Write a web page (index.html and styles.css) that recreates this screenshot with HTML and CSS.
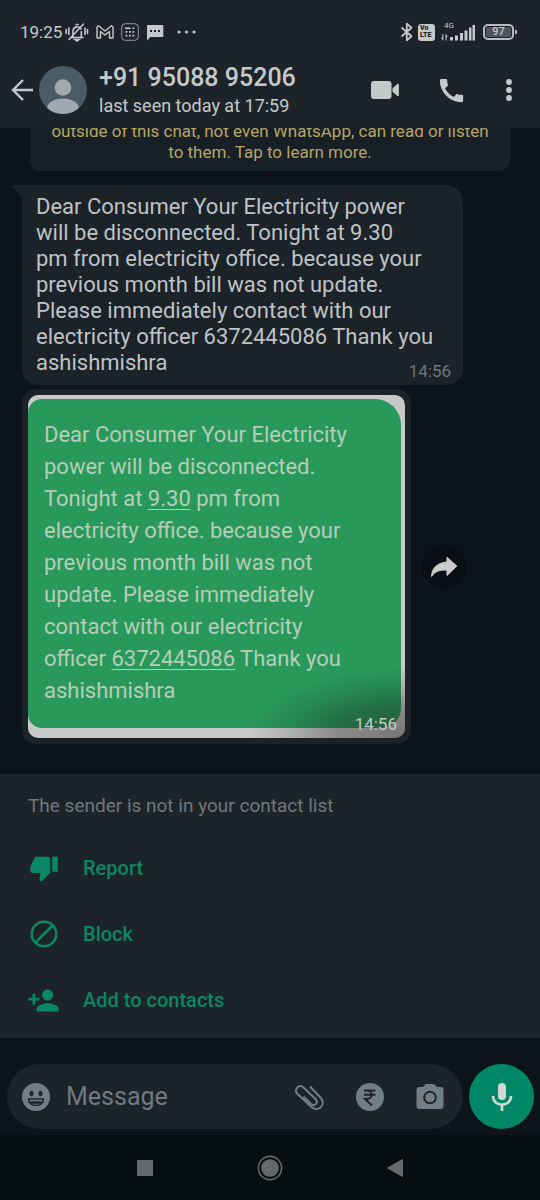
FILE: index.html
```html
<!DOCTYPE html>
<html lang="en">
<head>
<meta charset="utf-8">
<meta name="viewport" content="width=device-width, initial-scale=1">
<title>+91 95088 95206</title>
<link rel="stylesheet" href="styles.css">
</head>
<body>
<div class="screen">
  <header class="header">
    <div class="status">
      <div class="status-group status-left">
        <time class="clock">19:25</time>
        <svg class="bell" width="24" height="20" viewBox="0 0 24 20" fill="none" stroke="currentColor" stroke-width="1.6" stroke-linecap="round"><path d="M6 15.5h12M8 15V8.5a4.3 4.3 0 0 1 8-1.5M16.3 9.5V15M4 17.5 18.5 2M1.2 7.5v4M3.8 6v6.500M22.500 7.500v4M20 6v6.500M11 2.500h2"/><path d="M10 17.500h4l-2 1.500z" fill="currentColor"/></svg>
        <svg width="18" height="16" viewBox="0 0 18 16" fill="none" stroke="currentColor" stroke-width="1.4" stroke-linejoin="round"><path d="M1 14V3l1.500-1.200L9 7l6.500-5.200L17 3v11h-3.500V7.500L9 11 4.500 7.500V14z"/></svg>
        <svg width="18" height="18" viewBox="0 0 18 18"><rect x=".7" y=".7" width="16.600" height="16.600" rx="3.500" fill="none" stroke="currentColor" stroke-opacity=".7"/><path fill="currentColor" d="M4 4.500h5.500V6H4zM11.500 4.500h1.800V6h-1.800zM8 8h1.800v1.800H8zM11.500 8h1.800v1.800h-1.800zM4.500 8h1.800v1.800H4.500zM4.500 11.800h1.800v1.800H4.500zM8 11.800h1.800v1.800H8zM11.500 11.800h1.800v1.800h-1.800z"/></svg>
        <svg class="sms" width="18" height="17" viewBox="0 0 18 17"><path fill="currentColor" fill-rule="evenodd" d="M1.500 1h15a.8.8 0 0 1 .8.8v10.400a.8.8 0 0 1-.8.8H4.500L1 16.500V1.800A.8.8 0 0 1 1.500 1zM4 6v2h2V6zm4 0v2h2V6zm4 0v2h2V6z"/></svg>
        <svg class="more" width="20" height="4" viewBox="0 0 20 4" fill="currentColor"><circle cx="2" cy="2" r="1.500"/><circle cx="9.500" cy="2" r="1.500"/><circle cx="17" cy="2" r="1.500"/></svg>
      </div>
      <div class="status-group status-right">
        <svg width="14" height="20" viewBox="0 0 14 20" fill="none" stroke="currentColor" stroke-width="1.800" stroke-linejoin="round"><path d="m1.500 5.500 10 8.800-4.700 4V1.700l4.700 4-10 8.800"/></svg>
        <span class="volte"><span>Vo</span><span>LTE</span></span>
        <span class="signal"><span class="network">4G</span>
          <svg width="34" height="17" viewBox="0 0 34 17" fill="currentColor"><path d="M1.800 16.500 0 13.500h1.300V10h1v6.500zM5 10l1.800 3H5.500v3.500h-1V10zM9 13h3v3.500H9zM14 11.500h3v5h-3zM19 9h3v7.500h-3zM23.500 6.500h3v10h-3zM28 3.500h2.500v13H28zM31.500 1H34v15.500h-2.500z"/></svg></span>
        <span class="battery">97</span>
      </div>
    </div>
    <div class="appbar">
      <button class="icon-button back" aria-label="Back"><svg width="23" height="22" viewBox="0 0 23 22" fill="none" stroke="currentColor" stroke-width="2.400"><path d="M22 11H2M12 1 2 11l10 10"/></svg></button>
      <svg class="avatar" width="48" height="48" viewBox="0 0 48 48"><defs><clipPath id="disc"><circle cx="24" cy="24" r="24"/></clipPath></defs><g clip-path="url(#disc)"><path fill="#4b5c67" d="M0 0h48v48H0z"/><circle cx="24" cy="21.500" r="8.300" fill="#a1a9b0"/><path fill="#a1a9b0" d="M8 43c0-7 8-10.500 16-10.500S40 36 40 43v5H8z"/></g></svg>
      <div class="contact">
        <h1 class="name">+91 95088 95206</h1>
        <p class="seen">last seen today at 17:59</p>
      </div>
      <div class="actions">
        <button class="icon-button" aria-label="Video call"><svg width="30" height="20" viewBox="0 0 30 20" fill="currentColor"><rect x="1" y="1" width="20.500" height="18" rx="3"/><path d="M22.500 8.200 27 4.200c1-.8 1.900-.5 1.900.6v10.400c0 1.100-.9 1.400-1.900.6l-4.500-4z"/></svg></button>
        <button class="icon-button" aria-label="Voice call"><svg width="31" height="31" viewBox="0 0 24 24" fill="currentColor"><path d="M20.010 15.380c-1.230 0-2.420-.2-3.530-.56-.35-.12-.74-.03-1.010.24l-1.570 1.970c-2.830-1.350-5.480-3.900-6.890-6.830l1.950-1.660c.27-.28.35-.67.24-1.020-.37-1.110-.56-2.300-.56-3.530 0-.54-.45-.99-.99-.99H4.190C3.650 3 3 3.240 3 3.990 3 13.280 10.730 21 20.010 21c.71 0 .99-.63.99-1.180v-3.450c0-.54-.45-.99-.99-.99z"/></svg></button>
        <button class="icon-button" aria-label="More options"><svg width="12" height="24" viewBox="0 0 12 24" fill="currentColor"><circle cx="6" cy="4" r="2.900"/><circle cx="6" cy="12" r="2.900"/><circle cx="6" cy="20" r="2.900"/></svg></button>
      </div>
    </div>
  </header>

  <main class="chat">
    <p class="notice">outside of this chat, not even WhatsApp, can read or listen to them. Tap to learn more.</p>
    <article class="bubble text-bubble">
      <svg class="tail" width="12" height="14" viewBox="0 0 12 14"><path fill="#1b2228" d="M12 0H1.500C0 0 0 1 .8 2L10 13v1h2z"/></svg>
      <p class="message">Dear Consumer Your Electricity power<br>will be disconnected. Tonight at 9.30<br>pm from electricity office. because your<br>previous month bill was not update.<br>Please immediately contact with our<br>electricity officer 6372445086 Thank you<br>ashishmishra</p>
      <time class="stamp">14:56</time>
    </article>
    <div class="media-row">
      <article class="bubble media-bubble">
        <div class="photo">
          <p class="sheet">Dear Consumer Your Electricity<br>power will be disconnected.<br>Tonight at <a href="#time">9.30</a> pm from<br>electricity office. because your<br>previous month bill was not<br>update. Please immediately<br>contact with our electricity<br>officer <a href="tel:6372445086">6372445086</a> Thank you<br>ashishmishra</p>
          <time class="stamp photo-stamp">14:56</time>
        </div>
      </article>
      <button class="forward" aria-label="Forward"><svg width="28" height="22" viewBox="0 0 28 22" fill="currentColor"><path d="M17 1.200 26.800 10 17 19.500v-5.300C9.500 13.500 5 15.500 1.500 20.500 1.500 12 8 6.500 17 6z" stroke="currentColor" stroke-linejoin="round"/></svg></button>
    </div>
  </main>

  <section class="panel">
    <p class="panel-title">The sender is not in your contact list</p>
    <button class="panel-action"><span class="panel-icon"><svg width="30" height="30" viewBox="0 0 24 24" fill="currentColor"><path d="M15 3H6c-.83 0-1.540.5-1.840 1.220l-3.020 7.050c-.09.23-.14.47-.14.73v2c0 1.100.9 2 2 2h6.310l-.95 4.570-.03.32c0 .41.17.79.44 1.060L9.830 23l6.590-6.590c.36-.36.58-.86.58-1.410V5c0-1.100-.9-2-2-2zm3.500 0v12H23V3h-4.500z"/></svg></span>Report</button>
    <button class="panel-action"><span class="panel-icon"><svg width="30" height="30" viewBox="0 0 30 30" fill="none" stroke="currentColor" stroke-width="2.500"><circle cx="15" cy="15" r="12.300"/><path d="m6.500 23.500 17-17"/></svg></span>Block</button>
    <button class="panel-action"><span class="panel-icon"><svg width="33" height="33" viewBox="0 0 24 24" fill="currentColor"><path d="M15 12c2.210 0 4-1.790 4-4s-1.790-4-4-4-4 1.790-4 4 1.790 4 4 4zm-9-2V7H4v3H1v2h3v3h2v-3h3v-2H6zm9 4c-2.670 0-8 1.340-8 4v2h16v-2c0-2.660-5.330-4-8-4z"/></svg></span>Add to contacts</button>
  </section>

  <form class="compose">
    <div class="field">
      <button type="button" class="icon-button" aria-label="Emoji"><svg width="28" height="28" viewBox="0 0 28 28"><circle cx="14" cy="14" r="14" fill="currentColor"/><ellipse cx="9.500" cy="10.500" rx="2" ry="2.800" fill="#1c242a"/><ellipse cx="18.500" cy="10.500" rx="2" ry="2.800" fill="#1c242a"/><path d="M6.500 16h15c0 4-3 6.500-7.500 6.500S6.500 20 6.500 16z" fill="none" stroke="#1c242a" stroke-width="1.600" stroke-linejoin="round"/><path d="M7 18.200h14l-1.500 2.500h-11z" fill="#1c242a"/></svg></button>
      <input class="entry" type="text" placeholder="Message" aria-label="Message">
      <div class="tools">
        <button type="button" class="icon-button" aria-label="Attach"><svg width="30" height="30" viewBox="0 0 30 30" fill="none" stroke="currentColor" stroke-width="2" stroke-linecap="butt"><path d="M16 4.500 26.500 15.500C32.500 22.500 24.500 31 17.500 25L3.500 12C-.5 7.500 5 1.500 9.500 5.500L21.500 17c3.500 4-1 8-4.500 4.800L9.500 14.500"/></svg></button>
        <button type="button" class="icon-button" aria-label="Payment"><svg width="28" height="28" viewBox="0 0 28 28"><circle cx="14" cy="14" r="14" fill="currentColor"/><path d="M8 7.500h11.500M8 11.800h11.500M10 7.500c7.500 0 7.500 8.500 0 8.500H9l7 6.500" fill="none" stroke="#1c242a" stroke-width="2"/></svg></button>
        <button type="button" class="icon-button" aria-label="Camera"><svg width="28" height="28" viewBox="0 0 28 28"><path fill="currentColor" d="M10 1h8l3 3h3.500A3 3 0 0 1 27.500 7v16a3 3 0 0 1-3 3h-21a3 3 0 0 1-3-3V7a3 3 0 0 1 3-3H7z"/><circle cx="14" cy="14.500" r="5.800" fill="none" stroke="#1c242a" stroke-width="2"/></svg></button>
      </div>
    </div>
    <button type="button" class="mic" aria-label="Record voice message"><svg width="22" height="30" viewBox="0 0 22 30" fill="none" stroke="currentColor" stroke-width="2.600"><rect x="7" y="1" width="8" height="17" rx="4" fill="currentColor" stroke="none"/><path d="M2 14c0 11.500 18 11.500 18 0M11 22v7"/></svg></button>
  </form>

  <nav class="nav">
    <button class="icon-button nav-button" aria-label="Recent apps"><svg width="16" height="16" viewBox="0 0 16 16"><rect width="16" height="16" rx="1" fill="currentColor"/></svg></button>
    <button class="icon-button nav-button" aria-label="Home"><svg width="26" height="26" viewBox="0 0 26 26"><circle cx="13" cy="13" r="11.600" fill="none" stroke="currentColor" stroke-width="1.600"/><circle cx="13" cy="13" r="8.800" fill="currentColor"/></svg></button>
    <button class="icon-button nav-button" aria-label="Navigate back"><svg width="18" height="20" viewBox="0 0 18 20"><path fill="currentColor" d="M16 1.200c.6-.4 1 0 1 .6v16.400c0 .6-.4 1-1 .6L1.500 10.600c-.6-.4-.6-.8 0-1.200z"/></svg></button>
  </nav>
</div>
</body>
</html>
```
FILE: styles.css
```css
* { box-sizing: border-box; }

body {
  margin: 0;
  background: #0c131a;
  color: #bfc3c6;
  font-family: Roboto, "Noto Sans", sans-serif;
}

h1, p { margin: 0; }

button, input {
  border: 0;
  padding: 0;
  background: none;
  color: inherit;
  font: inherit;
}

svg { display: block; flex: none; }

.screen {
  display: flex;
  flex-direction: column;
  height: 100vh;
}

.header {
  flex: none;
  background: #1c242a;
  color: #c6c9ca;
  position: relative;
  z-index: 1;
}

.status {
  display: flex;
  justify-content: space-between;
  padding: 18px 24px 6px 20px;
}

.status-group {
  display: flex;
  align-items: center;
  height: 28px;
}

.status-left { gap: 7px; }
.status-right { gap: 4px; }

.clock { font-size: 17px; }
.bell { margin-left: -4px; }
.more { margin-left: 6px; }

.volte {
  display: flex;
  flex-direction: column;
  width: 17px;
  height: 17px;
  margin-right: 2px;
  padding: 1px 2px;
  border-radius: 3px;
  background: #c6c9ca;
  color: #1c242a;
  font-size: 7px;
  font-weight: 900;
  line-height: 7px;
}

.signal { position: relative; }

.network {
  position: absolute;
  left: 3px;
  top: -2px;
  font-size: 8px;
  line-height: 8px;
}

.battery {
  position: relative;
  width: 31px;
  height: 16px;
  margin: 0 2px 0 4px;
  border: 2px solid #b9bcbe;
  border-radius: 5px;
  background: #50565a;
  background-clip: content-box;
  padding: 1px;
  font-size: 11px;
  font-weight: 500;
  line-height: 10px;
  text-align: center;
}

.battery::after {
  content: "";
  position: absolute;
  right: -5px;
  top: 4px;
  width: 2px;
  height: 4px;
  background: #b9bcbe;
}

.appbar {
  display: flex;
  align-items: center;
  height: 76px;
  padding: 0 25px 0 11px;
}

.icon-button {
  display: flex;
  align-items: center;
  justify-content: center;
}

.avatar { margin: 0 12px 0 5px; }

.contact {
  flex: 1;
  min-width: 0;
  padding-top: 2px;
}

.name {
  font-size: 25px;
  font-weight: 500;
  line-height: 30px;
}

.seen {
  font-size: 18px;
  line-height: 26px;
}

.actions {
  display: flex;
  align-items: center;
  gap: 36px;
}

.chat {
  flex: 1;
  min-height: 0;
  display: flex;
  flex-direction: column;
  justify-content: flex-end;
  overflow: hidden;
  padding: 0 30px 30px 22px;
}

.notice {
  flex: none;
  margin: 0 0 14px 8px;
  padding: 8px 12px;
  border-radius: 10px;
  background: #172026;
  color: #b9a563;
  font-size: 17px;
  line-height: 21px;
  text-align: center;
}

.bubble {
  flex: none;
  position: relative;
  background: #1b2228;
}

.text-bubble {
  align-self: flex-start;
  width: fit-content;
  margin-bottom: 4px;
  padding: 9px 30px 9px 14px;
  border-radius: 0 16px 16px 16px;
}

.tail {
  position: absolute;
  left: -10px;
  top: 0;
}

.message {
  font-size: 22px;
  line-height: 26px;
}

.stamp {
  position: absolute;
  right: 12px;
  bottom: 4px;
  color: #70777c;
  font-size: 17px;
  line-height: 20px;
}

.media-row {
  flex: none;
  display: flex;
  align-items: center;
  gap: 11px;
}

.media-bubble {
  padding: 6px;
  border-radius: 14px;
}

.photo {
  position: relative;
  overflow: hidden;
  padding: 4px 4px 10px 0;
  border-radius: 10px;
  background: #c9c9c9;
}

.photo::after {
  content: "";
  position: absolute;
  inset: 0;
  background: radial-gradient(ellipse 160px 72px at 100% 100%, rgba(24, 24, 24, .48), rgba(24, 24, 24, .34) 45%, rgba(24, 24, 24, .12) 75%, rgba(24, 24, 24, 0));
}

.sheet {
  padding: 20px 54px 21px 16px;
  border-radius: 14px 26px 20px 14px;
  background: #29995b;
  color: #b5cdb9;
  font-size: 22px;
  line-height: 32px;
}

.sheet a {
  color: inherit;
  text-decoration: underline;
  text-decoration-thickness: 1px;
  text-underline-offset: 3px;
}

.photo-stamp {
  z-index: 1;
  right: 8px;
  color: #c4c8c6;
}

.forward {
  display: flex;
  align-items: center;
  justify-content: center;
  width: 44px;
  height: 44px;
  border-radius: 50%;
  background: #090f15;
  color: #cccccc;
}

.panel {
  flex: none;
  padding: 0 28px 5px;
  background: #1c242a;
}

.panel-title {
  padding: 19px 0 16px;
  color: #70777c;
  font-size: 19px;
  line-height: 26px;
}

.panel-action {
  display: flex;
  align-items: center;
  gap: 24px;
  width: 100%;
  height: 66px;
  color: #0a8765;
  font-size: 20px;
  font-weight: 500;
}

.panel-icon {
  display: flex;
  justify-content: center;
  width: 31px;
}

.compose {
  flex: none;
  display: flex;
  gap: 6px;
  padding: 26px 6px 6px 7px;
}

.field {
  flex: 1;
  min-width: 0;
  display: flex;
  align-items: center;
  gap: 16px;
  height: 65px;
  padding: 0 19px 0 15px;
  border-radius: 33px;
  background: #1c242a;
  color: #727e85;
}

.entry {
  flex: 1;
  min-width: 0;
  font-size: 25px;
  outline: 0;
}

.entry::placeholder { color: #70797f; opacity: 1; }

.tools { display: flex; gap: 32px; }

.mic {
  display: flex;
  align-items: center;
  justify-content: center;
  width: 65px;
  height: 65px;
  border-radius: 50%;
  background: #008767;
  color: #d2d8d5;
}

.nav {
  flex: none;
  display: flex;
  justify-content: center;
  height: 65px;
  background: #070e11;
  color: #66696b;
}

.nav-button { width: 125px; }
```
